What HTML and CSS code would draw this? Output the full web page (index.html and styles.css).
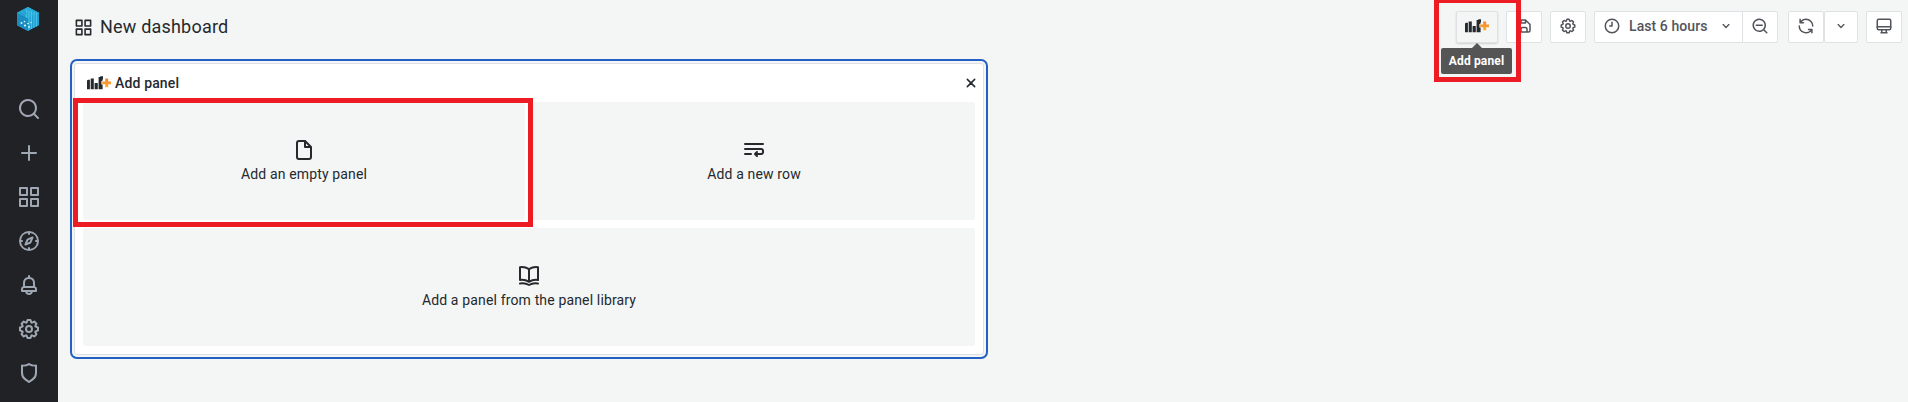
FILE: index.html
```html
<!DOCTYPE html>
<html lang="en">
<head>
<meta charset="utf-8">
<title>New dashboard</title>
<link rel="stylesheet" href="styles.css">
</head>
<body>
<svg class="defs" width="0" height="0">
  <symbol id="search" viewBox="0 0 24 24"><path d="M21.71,20.29,18,16.61A9,9,0,1,0,16.61,18l3.68,3.68a1,1,0,0,0,1.42,0A1,1,0,0,0,21.71,20.29ZM11,18a7,7,0,1,1,7-7A7,7,0,0,1,11,18Z"/></symbol>
  <symbol id="search-minus" viewBox="0 0 24 24"><path d="M21.71,20.29,18,16.61A9,9,0,1,0,16.61,18l3.68,3.68a1,1,0,0,0,1.42,0A1,1,0,0,0,21.71,20.29ZM11,18a7,7,0,1,1,7-7A7,7,0,0,1,11,18ZM15,10H7a1,1,0,0,0,0,2h8a1,1,0,0,0,0-2Z"/></symbol>
  <symbol id="plus" viewBox="0 0 24 24"><path d="M19,11H13V5a1,1,0,0,0-2,0v6H5a1,1,0,0,0,0,2h6v6a1,1,0,0,0,2,0V13h6a1,1,0,0,0,0-2Z"/></symbol>
  <symbol id="apps" viewBox="0 0 24 24"><path d="M10,13H3a1,1,0,0,0-1,1v7a1,1,0,0,0,1,1h7a1,1,0,0,0,1-1V14A1,1,0,0,0,10,13ZM9,20H4V15H9ZM21,2H14a1,1,0,0,0-1,1v7a1,1,0,0,0,1,1h7a1,1,0,0,0,1-1V3A1,1,0,0,0,21,2ZM20,9H15V4h5Zm1,4H14a1,1,0,0,0-1,1v7a1,1,0,0,0,1,1h7a1,1,0,0,0,1-1V14A1,1,0,0,0,21,13Zm-1,7H15V15h5ZM10,2H3A1,1,0,0,0,2,3v7a1,1,0,0,0,1,1h7a1,1,0,0,0,1-1V3A1,1,0,0,0,10,2ZM9,9H4V4H9Z"/></symbol>
  <symbol id="compass" viewBox="0 0 24 24"><path d="M12,2A10,10,0,1,0,22,12,10,10,0,0,0,12,2Zm1,17.93V19a1,1,0,0,0-2,0v.93A8,8,0,0,1,4.07,13H5a1,1,0,0,0,0-2H4.07A8,8,0,0,1,11,4.07V5a1,1,0,0,0,2,0V4.07A8,8,0,0,1,19.93,11H19a1,1,0,0,0,0,2h.93A8,8,0,0,1,13,19.93ZM15.14,7.55l-5,2.12a1,1,0,0,0-.52.52l-2.12,5a1,1,0,0,0,.21,1.1,1,1,0,0,0,.7.3.93.93,0,0,0,.4-.09l5-2.12a1,1,0,0,0,.52-.52l2.12-5a1,1,0,0,0-1.31-1.31Zm-2.49,5.1-2.28,1,1-2.28,2.28-1Z"/></symbol>
  <symbol id="bell" viewBox="0 0 24 24"><path d="M18,13.18V10a6,6,0,0,0-5-5.91V3a1,1,0,0,0-2,0V4.09A6,6,0,0,0,6,10v3.18A3,3,0,0,0,4,16v2a1,1,0,0,0,1,1H8.14a4,4,0,0,0,7.72,0H19a1,1,0,0,0,1-1V16A3,3,0,0,0,18,13.18ZM8,10a4,4,0,0,1,8,0v3H8Zm4,10a2,2,0,0,1-1.72-1h3.44A2,2,0,0,1,12,20Zm6-3H6V16a1,1,0,0,1,1-1H17a1,1,0,0,1,1,1Z"/></symbol>
  <symbol id="cog" viewBox="0 0 24 24"><path d="M21.32,9.55l-1.89-.63.89-1.78A1,1,0,0,0,20.13,6L18,3.87a1,1,0,0,0-1.15-.19l-1.78.89-.63-1.89A1,1,0,0,0,13.5,2h-3a1,1,0,0,0-.95.68L8.92,4.57,7.14,3.68A1,1,0,0,0,6,3.87L3.87,6a1,1,0,0,0-.19,1.15l.89,1.78-1.89.63A1,1,0,0,0,2,10.5v3a1,1,0,0,0,.68.95l1.89.63-.89,1.78A1,1,0,0,0,3.87,18L6,20.13a1,1,0,0,0,1.15.19l1.78-.89.63,1.89a1,1,0,0,0,.95.68h3a1,1,0,0,0,.95-.68l.63-1.89,1.78.89A1,1,0,0,0,18,20.13L20.13,18a1,1,0,0,0,.19-1.15l-.89-1.78,1.89-.63A1,1,0,0,0,22,13.5v-3A1,1,0,0,0,21.32,9.55ZM20,12.78l-1.2.4A2,2,0,0,0,17.64,16l.57,1.14-1.1,1.1L16,17.64a2,2,0,0,0-2.79,1.16l-.4,1.2H11.22l-.4-1.2A2,2,0,0,0,8,17.64l-1.14.57-1.1-1.1L6.36,16A2,2,0,0,0,5.2,13.18L4,12.78V11.22l1.2-.4A2,2,0,0,0,6.36,8L5.79,6.89l1.1-1.1L8,6.36A2,2,0,0,0,10.82,5.2l.4-1.2h1.56l.4,1.2A2,2,0,0,0,16,6.36l1.14-.57,1.1,1.1L17.64,8a2,2,0,0,0,1.16,2.79l1.2.4ZM12,8a4,4,0,1,0,4,4A4,4,0,0,0,12,8Zm0,6a2,2,0,1,1,2-2A2,2,0,0,1,12,14Z"/></symbol>
  <symbol id="shield" viewBox="0 0 24 24"><path d="M19.63,3.65a1,1,0,0,0-.84-.2,8,8,0,0,1-6.22-1.27,1,1,0,0,0-1.14,0A8,8,0,0,1,5.21,3.45a1,1,0,0,0-.84.2A1,1,0,0,0,4,4.43v7.45a9,9,0,0,0,3.77,7.33l3.65,2.6a1,1,0,0,0,1.16,0l3.65-2.6A9,9,0,0,0,20,11.88V4.43A1,1,0,0,0,19.63,3.65ZM18,11.88a7,7,0,0,1-2.93,5.7L12,19.77,8.93,17.58A7,7,0,0,1,6,11.88V5.58a10,10,0,0,0,6-1.39,10,10,0,0,0,6,1.39Z"/></symbol>
  <symbol id="file" viewBox="0 0 24 24"><path d="M20,8.94a1.31,1.31,0,0,0-.06-.27l0-.09a1.07,1.07,0,0,0-.19-.28h0l-6-6h0a1.07,1.07,0,0,0-.28-.19.32.32,0,0,0-.09,0A.88.88,0,0,0,13.05,2H7A3,3,0,0,0,4,5V19a3,3,0,0,0,3,3H17a3,3,0,0,0,3-3V9S20,9,20,8.94ZM14,5.41,16.59,8H14ZM18,19a1,1,0,0,1-1,1H7a1,1,0,0,1-1-1V5A1,1,0,0,1,7,4h5V9a1,1,0,0,0,1,1h5Z"/></symbol>
  <symbol id="wrap" viewBox="0 0 24 24"><g fill="none" stroke="currentColor" stroke-width="2" stroke-linecap="round" stroke-linejoin="round"><path d="M3 6H21M3 11H19.2A1.8 1.8 0 0 1 21 12.8V14.2A1.8 1.8 0 0 1 19.2 16H14M3 16H9"/><path d="M15 14L13 16L15 18"/></g></symbol>
  <symbol id="book" viewBox="0 0 24 24"><g fill="none" stroke="currentColor" stroke-width="2" stroke-linecap="round" stroke-linejoin="round"><path d="M12 5.2Q7.8 2.5 3 3.2V16Q8 15.3 12 17.8Q16 15.3 21 16V3.2Q16.2 2.5 12 5.2ZM12 5.2V17.5M3 19.6Q8 18.7 12 21Q16 18.7 21 19.6"/></g></symbol>
  <symbol id="save" viewBox="0 0 24 24"><path d="M20.71,9.29l-6-6a1,1,0,0,0-.32-.21A1.09,1.09,0,0,0,14,3H6A3,3,0,0,0,3,6V18a3,3,0,0,0,3,3H18a3,3,0,0,0,3-3V10A1,1,0,0,0,20.71,9.29ZM9,5h4V7H9Zm6,14H9V16a1,1,0,0,1,1-1h4a1,1,0,0,1,1,1Zm4-1a1,1,0,0,1-1,1H17V16a3,3,0,0,0-3-3H10a3,3,0,0,0-3,3v3H6a1,1,0,0,1-1-1V6A1,1,0,0,1,6,5H7V8A1,1,0,0,0,8,9h6a1,1,0,0,0,1-1V6.41l4,4Z"/></symbol>
  <symbol id="clock" viewBox="0 0 24 24"><g fill="none" stroke="currentColor" stroke-width="2" stroke-linecap="round" stroke-linejoin="round"><circle cx="12" cy="12" r="9"/><path d="M12 7V12H9"/></g></symbol>
  <symbol id="sync" viewBox="0 0 24 24"><path d="M19.91,15.51H15.38a1,1,0,0,0,0,2h2.4A8,8,0,0,1,4,12a1,1,0,1,0-2,0,10,10,0,0,0,16.88,7.23V21a1,1,0,0,0,2,0V16.5A1,1,0,0,0,19.91,15.51ZM12,2A10,10,0,0,0,5.12,4.77V3a1,1,0,0,0-2,0V7.5a1,1,0,0,0,1,1h4.5a1,1,0,0,0,0-2H6.22A8,8,0,0,1,20,12a1,1,0,0,0,2,0A10,10,0,0,0,12,2Z"/></symbol>
  <symbol id="angle" viewBox="0 0 24 24"><path d="M17,9.17a1,1,0,0,0-1.41,0L12,12.71,8.46,9.17a1,1,0,0,0-1.41,0,1,1,0,0,0,0,1.42l4.24,4.24a1,1,0,0,0,1.42,0L17,10.59A1,1,0,0,0,17,9.17Z"/></symbol>
  <symbol id="monitor" viewBox="0 0 24 24"><g fill="none" stroke="currentColor" stroke-width="2" stroke-linecap="round" stroke-linejoin="round"><rect x="3" y="3" width="18" height="14" rx="2"/><path d="M3 13H21M9 17V20M15 17V20M8 21H16"/></g></symbol>
  <symbol id="times" viewBox="0 0 24 24"><path d="M6.5 6.5L17.5 17.5M17.5 6.5L6.5 17.5" fill="none" stroke="currentColor" stroke-width="2.3" stroke-linecap="round"/></symbol>
  <symbol id="panel-add" viewBox="0 0 24 14">
    <path d="M0 4.4L1 3.8H2.9V13.2H0ZM3.7 2.6H6.8V13.2H3.7ZM7.6 7H10.8V13.2H7.6ZM11.6 1H13L13.4 .3H16V3.4H15.4V5H14.4V8.4H15.6V13.2H11.6Z" fill="#24292e"/>
    <path d="M18.2 2.4H21.2V5.4H24V8.2H21.2V11.2H18.2V8.2H15.2V5.4H18.2Z" fill="url(#plusfill)"/>
  </symbol>
  <linearGradient id="plusfill" x1="0" y1="0" x2="0" y2="1"><stop offset="0" stop-color="#f4832b"/><stop offset="1" stop-color="#fbb034"/></linearGradient>
</svg>

<nav class="sidebar">
  <svg class="logo" viewBox="0 0 22 24">
    <path d="M11 0L22 5.8V18.2L11 24L0 18.2V5.8Z" fill="#1f9fd2"/>
    <path d="M0 5.8L11 11V24L0 18.2Z" fill="#1b8cc2"/>
    <path d="M0 5.8L11 0L22 5.8L11 11Z" fill="#28abd8"/>
    <path d="M9.5 3V11M12 4V23M14.5 4V22M17 5V20.5M19.5 6V19.5" stroke="#4cc5ea" stroke-width=".9"/>
    <path d="M3 5.5L8 8.5M6 4L10 7" stroke="#1794c4" stroke-width=".8"/>
    <g fill="#d9f4fc"><circle cx="4.5" cy="16" r="1"/><circle cx="7.5" cy="14.5" r=".8"/><circle cx="8" cy="18.5" r="1.1"/><circle cx="11" cy="16.5" r=".8"/><circle cx="12" cy="20" r=".9"/><circle cx="14" cy="15.5" r=".7"/></g>
  </svg>
  <div class="menu">
    <svg class="i24"><use href="#search"/></svg>
    <svg class="i24"><use href="#plus"/></svg>
    <svg class="i24"><use href="#apps"/></svg>
    <svg class="i24"><use href="#compass"/></svg>
    <svg class="i24"><use href="#bell"/></svg>
    <svg class="i24"><use href="#cog"/></svg>
    <svg class="i24"><use href="#shield"/></svg>
  </div>
</nav>

<div class="main">
  <header class="navbar">
    <div class="title"><svg class="i19"><use href="#apps"/></svg><h1>New dashboard</h1></div>
    <div class="toolbar">
      <div class="anchor">
        <button class="btn add"><svg class="panel-icon"><use href="#panel-add"/></svg></button>
        <div class="tooltip">Add panel</div>
        <div class="highlight highlight-button"></div>
      </div>
      <button class="btn"><svg class="i18"><use href="#save"/></svg></button>
      <button class="btn"><svg class="i18"><use href="#cog"/></svg></button>
      <div class="group time-group">
        <button class="btn time"><svg class="i18"><use href="#clock"/></svg><span>Last 6 hours</span><svg class="i16"><use href="#angle"/></svg></button>
        <button class="btn zoom"><svg class="i18"><use href="#search-minus"/></svg></button>
      </div>
      <div class="group">
        <button class="btn"><svg class="i18"><use href="#sync"/></svg></button>
        <button class="btn interval"><svg class="i16"><use href="#angle"/></svg></button>
      </div>
      <button class="btn"><svg class="i18"><use href="#monitor"/></svg></button>
    </div>
  </header>

  <section class="panel">
    <div class="panel-head">
      <svg class="panel-icon"><use href="#panel-add"/></svg>
      <span>Add panel</span>
      <svg class="i16 close"><use href="#times"/></svg>
    </div>
    <div class="cards">
      <div class="card"><svg class="i24"><use href="#file"/></svg><span>Add an empty panel</span><div class="highlight highlight-card"></div></div>
      <div class="card"><svg class="i24"><use href="#wrap"/></svg><span>Add a new row</span></div>
      <div class="card wide"><svg class="i24"><use href="#book"/></svg><span>Add a panel from the panel library</span></div>
    </div>
  </section>
</div>
</body>
</html>
```
FILE: styles.css
```css
* { box-sizing: border-box; }
body {
  margin: 0;
  height: 402px;
  display: flex;
  overflow: hidden;
  background: #f4f5f5;
  color: #24292e;
  font: 400 14px/20px Roboto, sans-serif;
  letter-spacing: 0.15px;
}
svg { display: block; flex: none; fill: currentColor; }
.defs { position: absolute; }
.i16 { width: 16px; height: 16px; }
.i18 { width: 18px; height: 18px; }
.i19 { width: 19px; height: 19px; }
.i24 { width: 24px; height: 24px; }
.panel-icon { width: 24px; height: 14px; }

.sidebar {
  width: 58px;
  flex: none;
  padding-top: 7px;
  display: flex;
  flex-direction: column;
  align-items: center;
  background: #202226;
  color: #9fa7b3;
}
.logo { width: 22px; height: 24px; margin-right: 2px; }
.menu { display: flex; flex-direction: column; gap: 20px; margin-top: 66px; }

.main { flex: 1; min-width: 0; }
.navbar {
  height: 54px;
  padding: 0 6px 0 16px;
  display: flex;
  align-items: center;
  justify-content: space-between;
}
.title { display: flex; align-items: center; gap: 7px; }
h1 { margin: 0; font-size: 18px; font-weight: 400; line-height: 24px; letter-spacing: 0.2px; }

.toolbar { display: flex; gap: 8px; color: #52545c; }
.anchor { position: relative; }
.btn {
  width: 36px;
  height: 32px;
  padding: 0 0 2px;
  display: flex;
  align-items: center;
  justify-content: center;
  border: 1px solid #dfe2e5;
  border-radius: 2px;
  background: #fff;
  color: inherit;
  font: inherit;
  letter-spacing: inherit;
}
.add { width: 42px; background: #f4f5f5; box-shadow: 0 1px 2px rgba(0, 0, 0, 0.15); }
.group { display: flex; }
.time-group { margin-right: 2px; }
.time {
  width: 149px;
  padding: 0 8px 2px;
  justify-content: flex-start;
  gap: 8px;
  border-radius: 2px 0 0 2px;
  font-weight: 500;
  letter-spacing: 0.08px;
}
.time .i16 { margin-left: auto; }
.zoom { margin-left: -1px; border-radius: 0 2px 2px 0; }
.interval { width: 34px; }
.tooltip {
  position: absolute;
  left: -15px;
  top: 37px;
  z-index: 2;
  width: 71px;
  height: 26px;
  border-radius: 2px;
  background: #555;
  color: #fff;
  font-size: 12px;
  font-weight: 700;
  line-height: 26px;
  text-align: center;
  white-space: nowrap;
}
.tooltip::before {
  content: "";
  position: absolute;
  left: 31px;
  top: -5px;
  border: solid transparent;
  border-width: 0 5px 5px;
  border-bottom-color: #555;
}
.highlight { position: absolute; z-index: 3; border: 5px solid #ed1c24; }
.highlight-button { left: -22px; top: -13px; width: 87px; height: 84px; }
.highlight-card { left: -10px; top: -4px; width: 460px; height: 129px; }

.panel {
  width: 910px;
  height: 292px;
  margin: 9px 0 0 16px;
  padding: 0 8px 8px;
  border: 1px solid #dde0e4;
  border-radius: 3px;
  background: #fff;
  box-shadow: 0 0 0 2px #f4f5f5, 0 0 0 4px #245fc4;
}
.panel-head {
  height: 38px;
  padding: 0 0 0 4px;
  display: flex;
  align-items: center;
  gap: 4px;
  font-weight: 500;
}
.close { margin-left: auto; margin-right: -4px; }
.cards { display: grid; grid-template: 118px 118px / 1fr 1fr; gap: 8px; }
.card {
  position: relative;
  display: flex;
  flex-direction: column;
  align-items: center;
  justify-content: center;
  gap: 2px;
  border-radius: 2px;
  background: #f4f5f5;
}
.wide { grid-column: span 2; }
```
